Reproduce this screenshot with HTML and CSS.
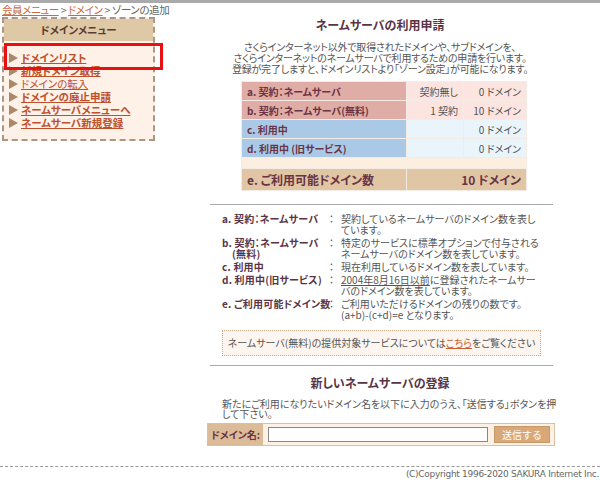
FILE: index.html
```html
<!DOCTYPE html>
<html lang="ja">
<head>
<meta charset="utf-8">
<link rel="stylesheet" href="styles.css">
</head>
<body>
<div class="page">
  <div class="layout">
    <aside class="side">
      <div class="crumbs"><a href="#">会員メニュー</a> &gt; <a href="#">ドメイン</a> &gt; ゾーンの追加</div>
      <div class="menu">
        <div class="menu-head">ドメインメニュー</div>
        <ul class="menu-list">
          <li class="b"><a href="#">ドメインリスト</a></li>
          <li class="b"><a href="#">新規ドメイン取得</a></li>
          <li><a href="#">ドメインの転入</a></li>
          <li class="b"><a href="#">ドメインの廃止申請</a></li>
          <li class="b"><a href="#">ネームサーバメニューへ</a></li>
          <li class="b"><a href="#">ネームサーバ新規登録</a></li>
        </ul>
      </div>
      <div class="highlight"></div>
    </aside>
    <main class="main">
      <h1 class="title">ネームサーバの利用申請</h1>
      <p class="intro">さくらインターネット以外で取得されたドメインや、サブドメインを、<br>さくらインターネットのネームサーバで利用するための申請を行います。<br>登録が完了しますと、ドメインリストより「ゾーン設定」が可能になります。</p>
      <table class="stats">
        <tr class="pink"><th>a. 契約：ネームサーバ</th><td class="c2">契約無し</td><td class="c3">0 ドメイン</td></tr>
        <tr class="pink"><th>b. 契約：ネームサーバ(無料)</th><td class="c2">1 契約</td><td class="c3">10 ドメイン</td></tr>
        <tr class="blue"><th>c. 利用中</th><td class="c2"></td><td class="c3">0 ドメイン</td></tr>
        <tr class="blue"><th>d. 利用中 (旧サービス)</th><td class="c2"></td><td class="c3">0 ドメイン</td></tr>
        <tr class="gap"><td colspan="3"></td></tr>
        <tr class="total"><th>e. ご利用可能ドメイン数</th><td colspan="2">10 ドメイン</td></tr>
      </table>
      <hr class="rule rule1">
      <dl class="defs">
        <dt>a. 契約：ネームサーバ</dt><dd>契約しているネームサーバのドメイン数を表しています。</dd>
        <dt>b. 契約：ネームサーバ<br><span class="ind">(無料)</span></dt><dd>特定のサービスに標準オプションで付与されるネームサーバのドメイン数を表しています。</dd>
        <dt>c. 利用中</dt><dd>現在利用しているドメイン数を表しています。</dd>
        <dt>d. 利用中(旧サービス)</dt><dd><u>2004年8月16日以前</u>に登録されたネームサーバのドメイン数を表しています。</dd>
        <dt>e. ご利用可能ドメイン数</dt><dd>ご利用いただけるドメインの残りの数です。<br>(a+b)-(c+d)=e となります。</dd>
      </dl>
      <div class="notice">ネームサーバ(無料)の提供対象サービスについては<a href="#">こちら</a>をご覧ください</div>
      <hr class="rule rule2">
      <h2 class="title title2">新しいネームサーバの登録</h2>
      <p class="lead">新たにご利用になりたいドメイン名を以下に入力のうえ、「送信する」ボタンを押して下さい。</p>
      <form class="reg">
        <label class="reg-label">ドメイン名:</label>
        <div class="reg-field"><input class="reg-input" type="text"><button class="reg-btn" type="button">送信する</button></div>
      </form>
    </main>
  </div>
  <footer class="foot">(C)Copyright 1996-2020 SAKURA Internet Inc.</footer>
</div>
</body>
</html>
```
FILE: styles.css
```css
* { box-sizing: border-box; }
html, body { margin: 0; padding: 0; background: #fff; }
body {
  font-family: "Noto Sans CJK JP", "DejaVu Sans", sans-serif;
  font-feature-settings: "palt";
  color: #555;
  font-size: 10px;
  border-top: 3px solid #aaa;
}
a { color: #c0583a; }
.page { width: 600px; }
.layout { display: flex; height: 460px; }
.side { position: relative; width: 200px; padding-left: 2px; }
.crumbs { font-size: 10.5px; line-height: 12px; color: #666; padding-top: 1px; height: 14px; white-space: nowrap; letter-spacing: -0.4px; }
.crumbs a { color: #c86a44; }
.menu {
  width: 153px; border: 2px dashed #a89888; background: #fdf1e8;
  height: 124px;
}
.menu-head {
  background: #dfc8a6; height: 22px; line-height: 21px; text-align: center;
  font-weight: bold; font-size: 10.5px; color: #5a3c30;
}
.menu-list { list-style: none; margin: 0; padding: 10px 0 0 5px; }
.menu-list li { line-height: 13px; font-size: 10.5px; padding-left: 12px; position: relative; }
.menu-list li::before {
  content: ""; position: absolute; left: 0; top: 2px;
  border-left: 9px solid #a88a6a; border-top: 5px solid transparent; border-bottom: 5px solid transparent;
}
.menu-list li.b { font-weight: bold; }
.menu-list a { color: #c0502c; }
.highlight {
  position: absolute; left: 4px; top: 40px; width: 159px; height: 27px;
  border: 3px solid #e81010;
}
.main { width: 350px; margin-left: 5px; }
.title { font-size: 12px; font-weight: bold; color: #5a3444; text-align: center; margin: 14px 0 0; line-height: 16px; }
.intro { text-align: center; margin: 8px 0 0; font-size: 10px; line-height: 11px; color: #555; letter-spacing: -0.2px; }
.stats {
  margin: 7px 0 0 36px; width: 286px; border-collapse: collapse;
  border: 1px solid #d8c0a0; font-size: 10px;
}
.stats th, .stats td { border: 1px solid #f4ece4; padding: 0 5px; height: 19px; }
.stats th { text-align: left; color: #6a3444; font-weight: bold; width: 165px; }
.stats .c2 { width: 57px; text-align: right; }
.stats .c3 { text-align: right; }
.pink th { background: #e0aca6; }
.pink td { background: #fce4e0; }
.blue th { background: #a9c9e6; }
.blue td { background: #e9f4fb; }
.gap td { height: 11px; background: #fcefe0; }
.total th, .total td { background: #e0c6a4; height: 22px; font-size: 12px; color: #6a3444; font-weight: bold; }
.total td { text-align: right; }
.rule { border: 0; border-top: 1px solid #aaa; margin: 0 0 0 5px; width: 343px; }
.rule1 { margin-top: 13px; }
.rule2 { margin-top: 9px; }
.defs {
  display: grid; grid-template-columns: 111px 1fr; margin: 8px 0 0 17px; row-gap: 2px;
  width: 322px;
}
.defs dt { font-weight: bold; color: #5a3444; font-size: 10px; line-height: 11px; white-space: nowrap; letter-spacing: 0.2px; }
.defs dt .ind { padding-left: 10px; }
.defs dd { margin: 0; position: relative; padding-left: 8px; font-size: 10px; line-height: 11px; color: #555; }
.defs dd::before { content: "："; position: absolute; left: -4px; top: 0; }
.notice {
  margin: 10px 0 0 17px; width: 319px; height: 26px; border: 1px dotted #c8a888;
  background: #fdf6f0; text-align: center; line-height: 24px; font-size: 10px; color: #555;
}
.notice a { color: #d05a30; }
.title2 { margin-top: 9px; }
.lead { margin: 8px 0 0 17px; font-size: 10px; line-height: 10px; color: #555; width: 335px; }
.reg { display: flex; margin: 4px 0 0 2px; height: 23px; width: 348px; border: 1px solid #d8c0a0; }
.reg-label { width: 55px; background: #dcbc98; color: #6a3444; font-weight: bold; font-size: 10px; line-height: 21px; padding-left: 3px; }
.reg-field { flex: 1; background: #fdf0e4; display: flex; align-items: center; padding-left: 5px; gap: 6px; }
.reg-input { width: 220px; height: 15px; border: 1px solid #888; background: #fff; padding: 0; }
.reg-btn {
  width: 56px; height: 17px; padding: 0; background: #d8a878; border: 1px solid #c89868;
  color: #fff; font-family: inherit; font-size: 10px; line-height: 15px;
}
.foot {
  border-top: 1px dashed #999; margin-top: 3px; text-align: right;
  font-family: "DejaVu Sans", sans-serif; font-size: 9px; color: #666; padding: 2px 1px 0 0;
  letter-spacing: -0.3px;
}
```
